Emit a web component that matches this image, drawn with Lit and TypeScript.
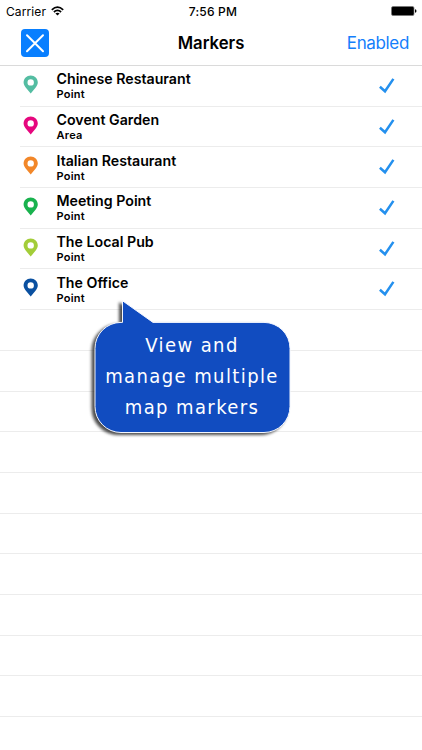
import { LitElement, html, css } from "lit";
import { customElement, property } from "lit/decorators.js";

interface Marker {
  name: string;
  kind: string;
  color: string;
}

const markers: Marker[] = [
  { name: "Chinese Restaurant", kind: "Point", color: "#54bda2" },
  { name: "Covent Garden", kind: "Area", color: "#e6077e" },
  { name: "Italian Restaurant", kind: "Point", color: "#f28729" },
  { name: "Meeting Point", kind: "Point", color: "#19b24e" },
  { name: "The Local Pub", kind: "Point", color: "#a3cd39" },
  { name: "The Office", kind: "Point", color: "#0a50a0" },
];

@customElement("marker-row")
export class MarkerRow extends LitElement {
  @property({ attribute: false }) marker!: Marker;

  static styles = css`
    :host {
      display: flex;
      box-sizing: border-box;
      height: 40.7px;
      margin-left: 20px;
      border-bottom: 1px solid #ececec;
      color: #000;
    }
    .pin {
      width: 15px;
      height: 19px;
      margin: 9px 0 0 3px;
      flex: none;
    }
    .text {
      flex: 1;
      margin-left: 18.5px;
      padding-top: 4.4px;
    }
    .name {
      font-size: 14.2px;
      line-height: 18px;
      font-weight: 560;
      letter-spacing: 0;
    }
    .kind {
      font-size: 11px;
      line-height: 13px;
      font-weight: 560;
      letter-spacing: 0.25px;
    }
    .check {
      width: 16px;
      height: 16px;
      margin: 12px 27px 0 0;
      flex: none;
    }
  `;

  render() {
    return html`
      <svg class="pin" viewBox="0 0 15 19">
        <path
          fill=${this.marker.color}
          fill-rule="evenodd"
          d="M7.7 .6C3.7 .6 .6 3.6 .6 7.5c0 1.9 .9 3.4 2.1 5L7.7 18.6l5-6.1c1.2-1.6 2.1-3.1 2.1-5C14.8 3.6 11.7 .6 7.7 .6zM7.7 4.2a3.2 3.2 0 1 1 0 6.4a3.2 3.2 0 0 1 0-6.4z"
        />
      </svg>
      <div class="text">
        <div class="name">${this.marker.name}</div>
        <div class="kind">${this.marker.kind}</div>
      </div>
      <svg class="check" viewBox="0 0 16 16">
        <path d="M.9 8.7L6 13.3L14.4 .9" fill="none" stroke="#2490ee" stroke-width="2.5" />
      </svg>
    `;
  }
}

@customElement("app-root")
export class AppRoot extends LitElement {
  static styles = css`
    :host {
      display: block;
      position: relative;
      width: 422px;
      height: 750px;
      overflow: hidden;
      background: #fff;
      color: #000;
      font-family: Inter, "Liberation Sans", sans-serif;
    }
    .status {
      display: grid;
      grid-template-columns: 1fr auto 1fr;
      align-items: center;
      height: 22px;
      padding: 0 5px 0 6px;
      box-sizing: border-box;
      font-size: 12px;
    }
    .carrier {
      display: flex;
      align-items: center;
      gap: 5px;
      letter-spacing: 0.1px;
    }
    .time {
      font-weight: 500;
      letter-spacing: 0.2px;
      margin-left: 3px;
    }
    .wifi {
      width: 13px;
      height: 10px;
    }
    .battery {
      width: 26px;
      height: 10px;
      justify-self: end;
    }
    .nav {
      display: grid;
      grid-template-columns: 1fr auto 1fr;
      align-items: center;
      height: 44px;
      box-sizing: border-box;
      padding: 0 13px;
      border-bottom: 1px solid #dadada;
    }
    .close {
      width: 28px;
      height: 28px;
      margin: -1px 0 0 8px;
    }
    .title {
      font-size: 16.7px;
      font-weight: 580;
      margin-top: -1px;
    }
    .enabled {
      justify-self: end;
      font-size: 17px;
      letter-spacing: -0.35px;
      margin-top: -1px;
      color: #147efb;
    }
    .blank {
      box-sizing: border-box;
      height: 40.7px;
      border-bottom: 1px solid #ececec;
    }
    .tip {
      position: absolute;
      left: 84px;
      top: 292px;
      width: 214px;
      height: 148px;
    }
    .shape {
      display: block;
      width: 214px;
      height: 148px;
    }
    .caption {
      position: absolute;
      left: 10px;
      top: 38.3px;
      width: 196px;
      text-align: center;
      color: #fff;
      font-family: "DejaVu Sans Condensed", "DejaVu Sans", sans-serif;
      font-stretch: condensed;
      font-size: 20px;
      line-height: 30.7px;
      letter-spacing: 1.4px;
    }
  `;

  render() {
    return html`
      <div class="status">
        <div class="carrier">
          <span>Carrier</span>
          <svg class="wifi" viewBox="0 0 13 10">
            <g fill="none" stroke="#000" stroke-width="1.7">
              <path d="M.8 3.8Q6.5-1.7 12.2 3.8" />
              <path d="M2.9 6Q6.5 2.7 10.1 6" />
            </g>
            <path d="M4.4 7.5Q6.5 5.8 8.6 7.5L6.5 9.6z" />
          </svg>
        </div>
        <div class="time">7:56 PM</div>
        <svg class="battery" viewBox="0 0 26 10">
          <rect x=".5" y=".5" width="22.5" height="9" rx="1.5" fill="#000" stroke="#777" stroke-width=".7" />
          <path d="M24 3.2q1.5 .3 1.5 1.8t-1.5 1.8z" />
        </svg>
      </div>
      <div class="nav">
        <svg class="close" viewBox="0 0 28 28">
          <rect width="28" height="28" rx="4" fill="#087fff" />
          <path d="M6 6.3L22 22.3M22 6.3L6 22.3" stroke="#fff" stroke-width="2" stroke-linecap="round" />
        </svg>
        <div class="title">Markers</div>
        <div class="enabled">Enabled</div>
      </div>
      ${markers.map((m) => html`<marker-row .marker=${m}></marker-row>`)}
      ${Array.from({ length: 10 }, () => html`<div class="blank"></div>`)}
      <div class="tip">
        <svg class="shape" viewBox="84 292 214 148">
          <defs>
            <filter id="shade" x="-10%" y="-10%" width="120%" height="120%" color-interpolation-filters="sRGB">
              <feDropShadow dx="-3" dy="2" stdDeviation="1.4" flood-color="#000" flood-opacity=".7" />
            </filter>
          </defs>
          <path
            filter="url(#shade)"
            d="M122.5 300.8L153 322.4H264a26 26 0 0 1 26 26V406.5a26 26 0 0 1-26 26H121a26 26 0 0 1-26-26V348.4a26 26 0 0 1 26-26h1.5z"
            fill="#114cc0"
            stroke="#f4f7ff"
            stroke-width="1"
          />
        </svg>
        <div class="caption">View and<br />manage multiple<br />map markers</div>
      </div>
    `;
  }
}
